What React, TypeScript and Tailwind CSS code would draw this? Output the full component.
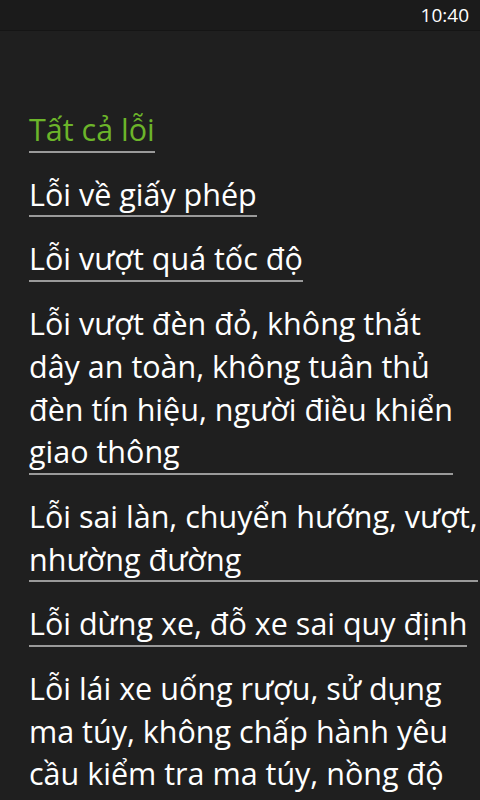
import React from 'react';

type Category = {
  lines: string[];
  active?: boolean;
  cut?: boolean;
};

// các dòng được ngắt sẵn giống màn hình gốc
const CATEGORIES: Category[] = [
  { lines: ['Tất cả lỗi'], active: true },
  { lines: ['Lỗi về giấy phép'] },
  { lines: ['Lỗi vượt quá tốc độ'] },
  {
    lines: [
      'Lỗi vượt đèn đỏ, không thắt',
      'dây an toàn, không tuân thủ',
      'đèn tín hiệu, người điều khiển',
      'giao thông',
    ],
  },
  { lines: ['Lỗi sai làn, chuyển hướng, vượt,', 'nhường đường'] },
  { lines: ['Lỗi dừng xe, đỗ xe sai quy định'] },
  {
    // mục cuối bị cắt ở mép dưới màn hình
    lines: [
      'Lỗi lái xe uống rượu, sử dụng',
      'ma túy, không chấp hành yêu',
      'cầu kiểm tra ma túy, nồng độ',
    ],
    cut: true,
  },
];

const StatusBar: React.FC = () => (
  <div className="h-[31px] bg-[#1b1b1b] border-b border-[#151515] flex items-center justify-end pr-[11px]">
    <span className="text-[19px] leading-none text-white">10:40</span>
  </div>
);

const App: React.FC = () => {
  return (
    <div
      className="w-[480px] h-[800px] overflow-hidden bg-[#1f1f1f] text-white"
      style={{ fontFamily: '"Open Sans", "Noto Sans", sans-serif' }}
    >
      <StatusBar />

      <div className="pl-[29px] pt-[77px] flex flex-col items-start gap-[20px]">
        {CATEGORIES.map((cat, i) => (
          <div
            key={i}
            className={`inline-block whitespace-nowrap border-b-2 text-[30.5px] leading-[42.7px] ${
              cat.cut ? 'border-transparent' : 'border-[#9a9a9a]'
            } ${cat.active ? 'text-[#6cb52a]' : 'text-white'}`}
          >
            {cat.lines.map((line, j) => (
              <div key={j}>{line}</div>
            ))}
          </div>
        ))}
      </div>
    </div>
  );
};

export default App;
